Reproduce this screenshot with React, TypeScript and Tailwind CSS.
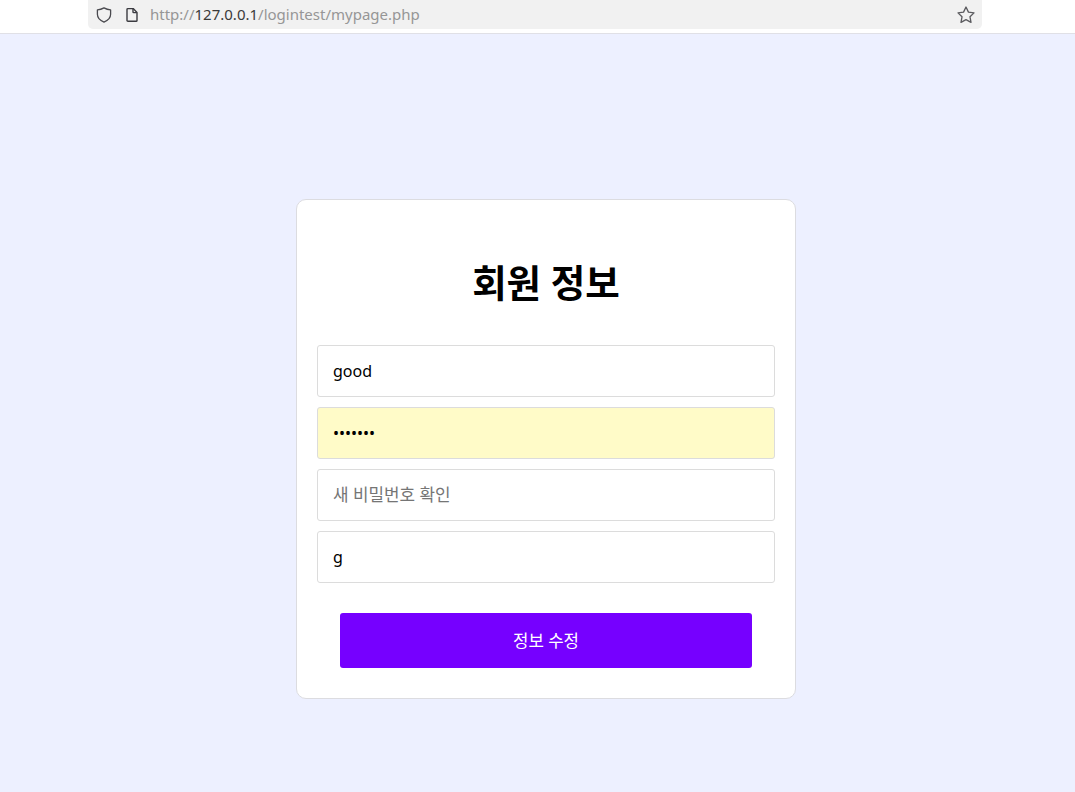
import React from 'react'

const fontStack = "font-['Noto_Sans','Noto_Sans_CJK_KR',sans-serif]"

const BrowserBar = () => (
    <div className='h-[34px] bg-white border-b border-[#e0e0e6] px-[88px]'>
        <div className='w-[894px] h-[29px] bg-[#f1f1f1] rounded-b-[5px] flex items-center text-[15px]'>
            <svg className='ml-[8px] w-[16px] h-[16px] text-[#4a4a4f]' viewBox="0 0 16 16" fill="none" stroke="currentColor" strokeWidth="1.3" strokeLinejoin="round">
                <path d="M8 .9c2 1.1 4.1 1.8 6.6 2v4.4c0 3.5-2.7 6.2-6.6 7.8-3.9-1.6-6.6-4.3-6.6-7.8V2.9C3.9 2.7 6 2 8 .9z" />
            </svg>
            <svg className='ml-[12px] w-[16px] h-[16px] text-[#3b3b40]' viewBox="0 0 16 16" fill="none" stroke="currentColor" strokeWidth="1.4" strokeLinejoin="round">
                <path d="M3 2.5c0-.5.4-.9.9-.9h5.3L13 5.4v8c0 .5-.4.9-.9.9H3.9c-.5 0-.9-.4-.9-.9z" />
                <path d="M9 1.8v3.1c0 .4.3.7.7.7h3.1" />
            </svg>
            <span className='ml-[10px] text-[#969696]'>
                http://<span className='text-[#3a3a3a]'>127.0.0.1</span>/logintest/mypage.php
            </span>
            <svg className='ml-auto mr-[6px] w-[20px] h-[20px] text-[#5b5b5f]' viewBox="0 0 18 18" fill="none" stroke="currentColor" strokeWidth="1.2" strokeLinejoin="round">
                <path d="M9 1.8l2.2 4.6 5 .7-3.6 3.5.9 5-4.5-2.4-4.5 2.4.9-5L1.8 7.1l5-.7z" />
            </svg>
        </div>
    </div>
)

const Field = ({ type = 'text', value, placeholder, filled }: { type?: string, value?: string, placeholder?: string, filled?: boolean }) => (
    <input
        type={type}
        defaultValue={value}
        placeholder={placeholder}
        readOnly
        className={`w-full h-[52px] px-[15px] border border-[#dcdcdc] rounded-[3px] text-[16px] text-black outline-none placeholder:text-[#757575] placeholder:text-[16.9px] ${filled ? 'bg-[#fffbc8]' : 'bg-white'} ${fontStack}`}
    />
)

export default function App() {
    return (
        <div className={`w-[1075px] h-[792px] overflow-hidden bg-[#edf0ff] ${fontStack}`}>
            <BrowserBar />

            {/* Card */}
            <div className='mt-[165px] ml-[296px] w-[500px] h-[500px] bg-white border border-[#dcdce0] rounded-[10px] px-[20px] pt-[57px]'>
                <h1 className='text-[37.5px] leading-[52px] font-bold text-black text-center'>회원 정보</h1>

                <div className='mt-[36px] flex flex-col gap-[10px]'>
                    <Field value="good" />
                    <Field type="password" value="1234567" filled />
                    <Field placeholder="새 비밀번호 확인" />
                    <Field value="g" />
                </div>

                <button className='block mt-[30px] mx-auto w-[412px] h-[55px] bg-[#7600ff] text-white text-[16.8px] rounded-[3px]'>
                    정보 수정
                </button>
            </div>
        </div>
    )
}
